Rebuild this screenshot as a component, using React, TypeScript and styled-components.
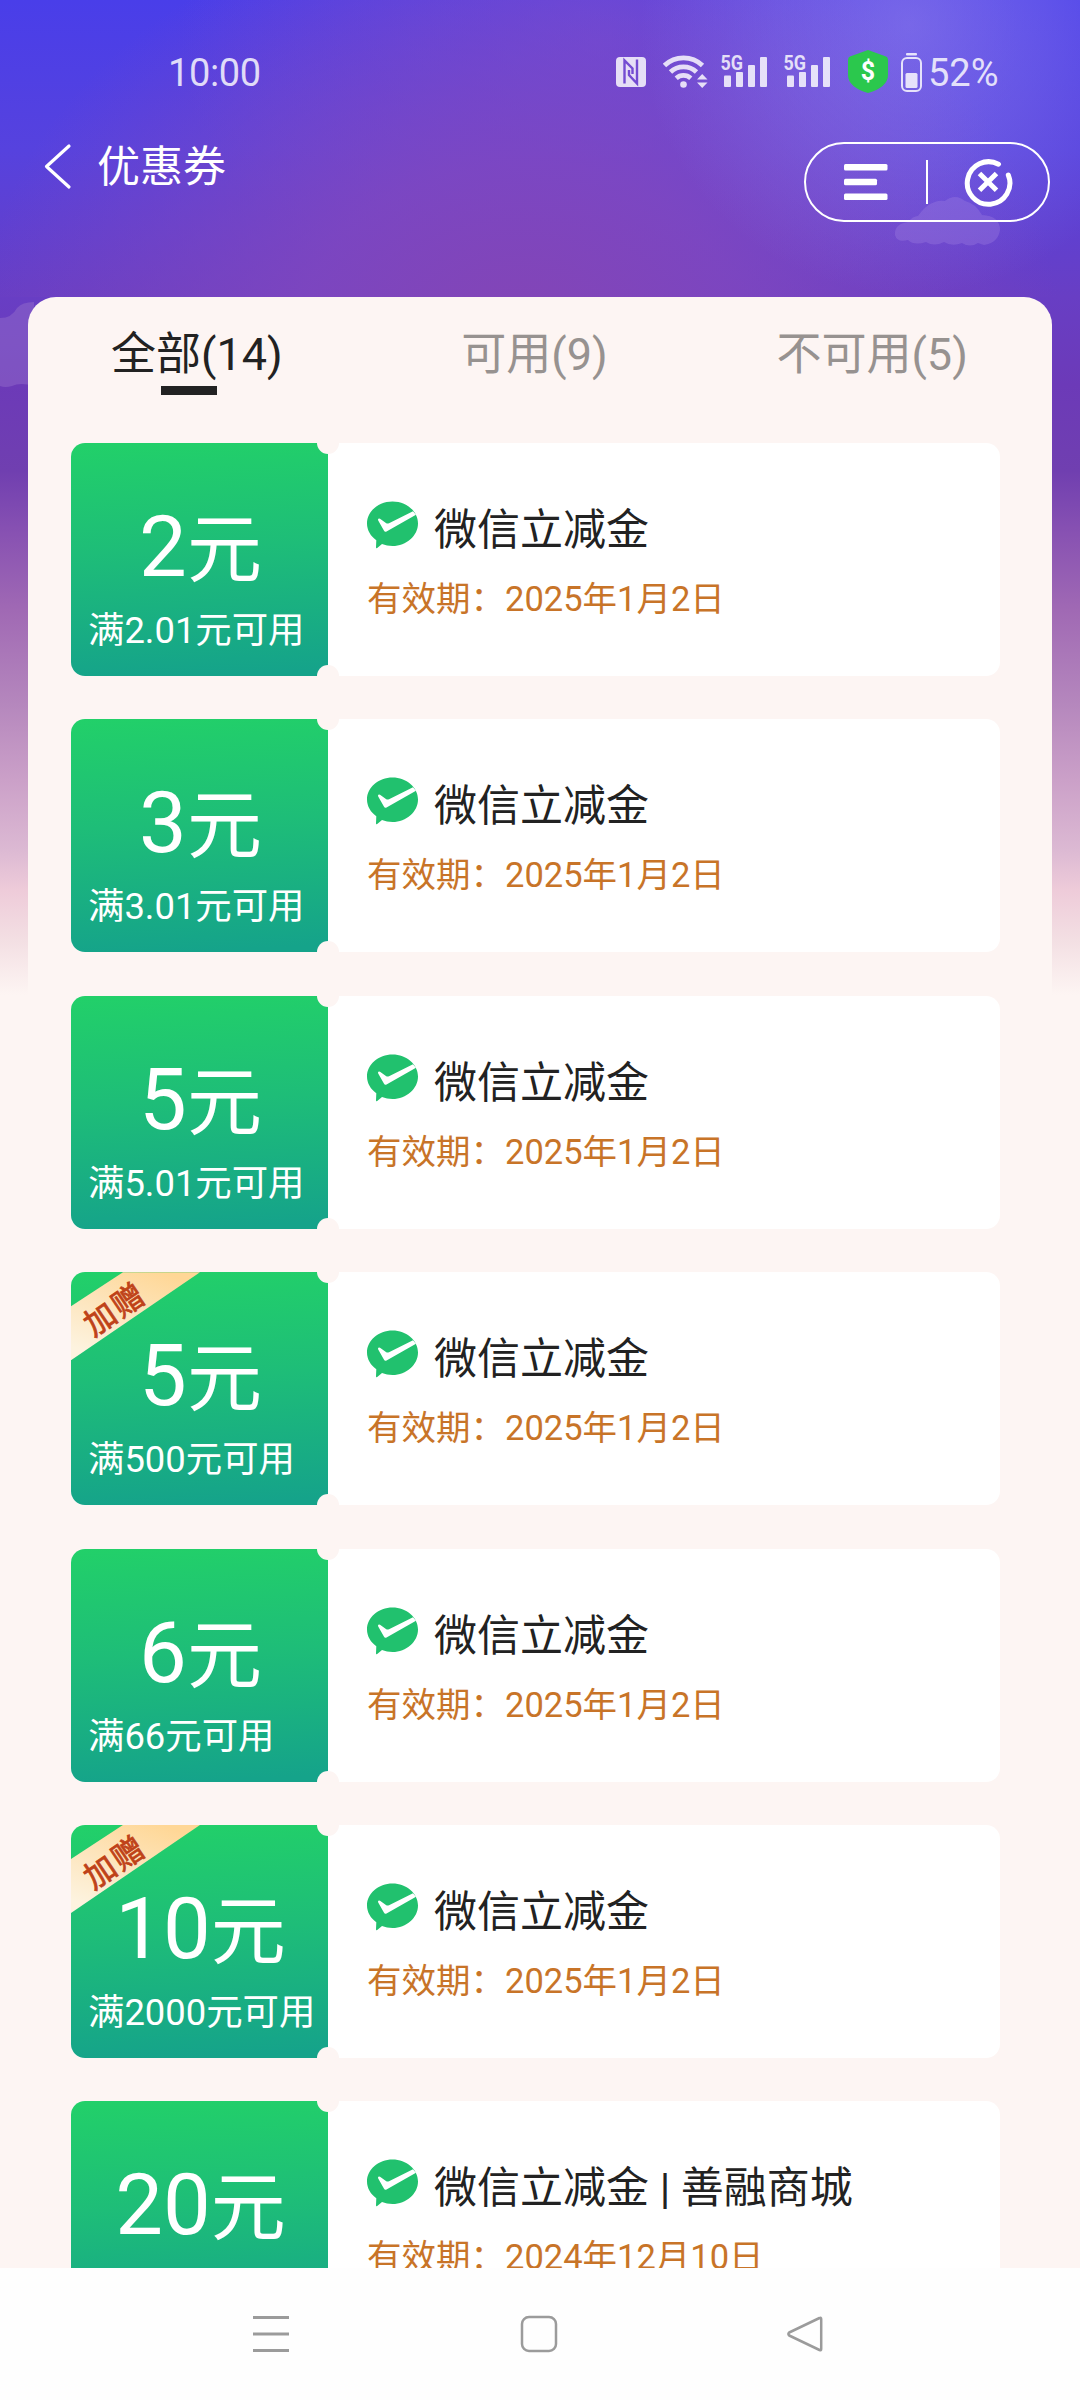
import React from "react";
import styled, { createGlobalStyle } from "styled-components";

const GlobalStyle = createGlobalStyle`
  * { box-sizing: border-box; }
  html, body { margin: 0; padding: 0; background: #fdf5f3; }
  body { font-family: Roboto, "Noto Sans CJK SC", sans-serif; }
`;

const Screen = styled.div`
  position: relative;
  width: 1080px;
  height: 2400px;
  overflow: hidden;
  display: flex;
  flex-direction: column;
  background:
    radial-gradient(ellipse 270px 270px at 910px 25px, rgba(150, 134, 236, 0.55), rgba(150, 134, 236, 0.3) 50%, rgba(150, 134, 236, 0) 100%) no-repeat 0 0 / 1080px 297px,
    radial-gradient(ellipse 540px 420px at 520px 330px, #8345b6 0%, rgba(129, 71, 190, 0.8) 40%, rgba(124, 73, 205, 0) 100%) no-repeat 0 0 / 1080px 297px,
    radial-gradient(ellipse 420px 300px at 600px 40px, rgba(124, 80, 210, 0.6), rgba(124, 80, 210, 0) 100%) no-repeat 0 0 / 1080px 297px,
    linear-gradient(180deg, #493ee9 0, #5642de 150px, #683ec4 297px, #6c3ab8 385px, #703fb0 471px, #8650b2 528px,
      #a069b4 610px, #b587bd 704px, #cba0c8 780px, #dcb9d3 850px, #eecbd9 890px, #f3dfe3 940px, #fdf5f3 995px);
`;

const Clouds = styled.svg`
  position: absolute;
  left: 0;
  top: 0;
`;

const StatusBar = styled.header`
  position: relative;
  height: 142px;
  padding: 50px 0 0 168px;
  display: flex;
  align-items: flex-start;
  color: rgba(255, 255, 255, 0.82);
  font-size: 38px;
  line-height: 46px;
`;

const Clock = styled.span`
  width: 448px;
  letter-spacing: -0.4px;
`;

const Battery = styled.span`
  display: flex;
  gap: 6px;
`;

const StatusIcons = styled.div`
  display: flex;
  align-items: flex-start;
  svg { display: block; flex: none; }
`;

const Gap = styled.i<{ $w: number }>`
  width: ${(p) => p.$w}px;
`;

const TitleBar = styled.div`
  position: relative;
  height: 155px;
  padding: 0 30px 0 43px;
  display: flex;
  align-items: flex-start;
  justify-content: space-between;
`;

const BackLink = styled.div`
  display: flex;
  align-items: center;
  gap: 25px;
  height: 50px;
  color: #fff;
`;

const PageTitle = styled.h1`
  margin: 0;
  font-size: 43px;
  line-height: 50px;
  font-weight: 400;
`;

const Capsule = styled.div`
  width: 246px;
  height: 80px;
  border: 2px solid #fff;
  border-radius: 40px;
  display: flex;
  align-items: center;
  padding-left: 38px;
`;

const Divider = styled.span`
  width: 2px;
  height: 44px;
  margin: 0 34px 0 38px;
  background: #fff;
`;

const Panel = styled.main`
  position: relative;
  width: 1024px;
  height: 1971px;
  margin: 0 28px;
  overflow: hidden;
  border-radius: 28px 28px 0 0;
  background: #fdf5f3;
`;

const Tabs = styled.nav`
  display: grid;
  grid-template-columns: repeat(3, 1fr);
  height: 146px;
  padding: 30px 11px 0 0;
`;

const Tab = styled.div<{ $active?: boolean }>`
  display: flex;
  flex-direction: column;
  align-items: center;
  font-size: 45px;
  line-height: 56px;
  color: ${(p) => (p.$active ? "#222222" : "#979290")};
`;

const Underline = styled.span`
  width: 56px;
  height: 9px;
  margin: 3px 16px 0 0;
  background: #222;
`;

const CouponList = styled.div`
  display: flex;
  flex-direction: column;
  gap: 43.4px;
  padding: 0 52px 0 43px;
`;

const Coupon = styled.article`
  position: relative;
  flex: none;
  display: flex;
  height: 233px;
  border-radius: 14px;
  background: #fff;
  overflow: hidden;

  &::before,
  &::after {
    content: "";
    position: absolute;
    z-index: 1;
    left: 246px;
    width: 22px;
    height: 22px;
    border-radius: 50%;
    background: #fdf5f3;
  }
  &::before { top: -11px; }
  &::after { bottom: -11px; }
`;

const Value = styled.div`
  position: relative;
  width: 257px;
  padding-top: 64px;
  color: #fff;
  background: linear-gradient(177deg, #22d069 0%, #1ebd78 45%, #15a38a 97%);
`;

const Amount = styled.div`
  height: 80px;
  line-height: 80px;
  font-size: 85px;
  text-align: center;
  white-space: nowrap;
  padding-left: 2px;
`;

const Unit = styled.span`
  font-size: 75px;
  line-height: 0;
`;

const Condition = styled.div`
  margin: 21px 0 0 17px;
  font-size: 36.4px;
  line-height: 45px;
  white-space: nowrap;
`;

const Ribbon = styled.div`
  position: absolute;
  left: 0;
  top: 0;
  width: 129px;
  height: 88px;
  display: flex;
  align-items: center;
  justify-content: center;
  padding: 0 44px 18px 0;

  &::before {
    content: "";
    position: absolute;
    inset: 0;
    clip-path: polygon(52px 0, 129px 0, 0 88px, 0 34px);
    background: linear-gradient(200deg, #ffd796 10%, #fde3b8 45%, #fdf3df 90%);
  }
`;

const RibbonText = styled.span`
  position: relative;
  font-family: "Noto Sans CJK SC", sans-serif;
  font-size: 31.5px;
  line-height: 34px;
  letter-spacing: 2px;
  white-space: nowrap;
  color: #bf4218;
  -webkit-text-stroke: 0.8px #bf4218;
  transform: rotate(-34deg);
`;

const Info = styled.div`
  padding: 58px 0 0 39px;
`;

const InfoTitle = styled.div`
  display: flex;
  align-items: flex-start;
  gap: 16px;
  height: 58px;
  font-size: 43px;
  line-height: 58px;
  color: #222;
  white-space: nowrap;
`;

const Validity = styled.div`
  margin-top: 18px;
  font-size: 34.5px;
  line-height: 44px;
  color: #c87428;
  white-space: nowrap;
`;

const SystemNav = styled.footer`
  position: relative;
  height: 132px;
  display: flex;
  align-items: center;
  padding-left: 252px;
  gap: 229.5px;
  background: #fefefe;
`;

const Nfc = () => (
  <svg width="30" height="44" viewBox="0 0 30 44">
    <rect x="0" y="7" width="30" height="30" rx="4" fill="currentColor" />
    <path d="M8.500 33.500V10.500L16.500 18.500V24M21 9.500V33.500L13 25V20" fill="none" stroke="#744cd2" strokeWidth="2.400" />
  </svg>
);

const Wifi = () => (
  <svg width="45" height="44" viewBox="0 0 45 44" fill="none">
    <g stroke="currentColor" strokeWidth="4.800">
      <path d="M1.500 15.500A27.500 27.500 0 0 1 39.500 15.500" />
      <path d="M7.500 22A19 19 0 0 1 33.500 22" />
      <path d="M13.200 28.200A11 11 0 0 1 27.800 28.200" />
    </g>
    <circle cx="20.500" cy="34.500" r="3.300" fill="currentColor" />
    <path d="M34 29.500L39.200 24L44.500 29.500ZM34 32.500L39.200 38L44.500 32.500Z" fill="currentColor" />
  </svg>
);

const Signal = () => (
  <svg width="46" height="44" viewBox="0 0 46 44" fill="currentColor">
    <text x="-0.500" y="20" fontFamily="Roboto, sans-serif" fontSize="20.500" fontWeight="700" textLength="22.500" lengthAdjust="spacingAndGlyphs">5G</text>
    <rect x="3" y="25.500" width="7" height="11.500" rx="1" />
    <rect x="15" y="22" width="7" height="15" rx="1" />
    <rect x="27" y="15" width="7" height="22" rx="1" />
    <rect x="39" y="7" width="7" height="30" rx="1" />
  </svg>
);

const Shield = () => (
  <svg width="40" height="44" viewBox="0 0 40 44">
    <path d="M20 0L38 6.500Q40 7.300 40 10V25Q40 37 20 43Q0 37 0 25V10Q0 7.300 2 6.500Z" fill="#2bc84d" />
    <text x="20" y="30" textAnchor="middle" fontFamily="Roboto, sans-serif" fontSize="25" fontWeight="700" fill="#fff">$</text>
  </svg>
);

const BatteryIcon = () => (
  <svg width="21" height="44" viewBox="0 0 21 44">
    <rect x="5" y="3" width="11" height="2.500" rx="1" fill="currentColor" />
    <rect x="1" y="8" width="19" height="33" rx="5" fill="none" stroke="currentColor" strokeWidth="2" />
    <rect x="4.500" y="23" width="12" height="15" rx="1.500" fill="currentColor" />
  </svg>
);

const PayIcon = () => (
  <svg width="51" height="48" viewBox="0 0 51 48">
    <path
      d="M25.500 0.500C39.500 0.500 51 10.300 51 22.500S39.500 45 25.500 45C21.800 45 18.200 44.300 15 43L10.200 47Q9 47.600 9 46.200L9.300 39.200C3.600 35.200 0 29.200 0 22.500C0 10.300 11.500 0.500 25.500 0.500Z"
      fill="#21c16e"
    />
    <path d="M11 18.300Q11.600 17 13 17.800L19.300 22.200Q20.500 22.800 22 22.200L46 10.200L49 13.700L19.500 30.500Q17.800 31.300 16.900 29.500L11.200 19.600Z" fill="#fff" />
  </svg>
);

const coupons = [
  { amount: "2", condition: "满2.01元可用", title: "微信立减金", date: "2025年1月2日" },
  { amount: "3", condition: "满3.01元可用", title: "微信立减金", date: "2025年1月2日" },
  { amount: "5", condition: "满5.01元可用", title: "微信立减金", date: "2025年1月2日" },
  { amount: "5", condition: "满500元可用", title: "微信立减金", date: "2025年1月2日", bonus: true },
  { amount: "6", condition: "满66元可用", title: "微信立减金", date: "2025年1月2日" },
  { amount: "10", condition: "满2000元可用", title: "微信立减金", date: "2025年1月2日", bonus: true },
  { amount: "20", condition: "", title: "微信立减金 | 善融商城", date: "2024年12月10日" },
];

export default function App() {
  return (
    <>
      <GlobalStyle />
      <Screen>
        <Clouds width="1080" height="420" viewBox="0 0 1080 420">
          <path
            d="M895 235Q894 224 908 222Q913 216 918 216Q930 199 945 201Q955 193 965 201Q975 203 982 215Q1000 216 1000 230Q998 243 984 245L978 243Q970 248 962 243Q952 247 944 242Q934 247 926 242Q914 246 908 240Q897 243 895 235Z"
            fill="rgba(160,130,225,0.34)"
          />
          <path d="M0 318Q12 318 17 308Q22 302 34 302V386Q20 382 12 386Q5 388 0 386Z" fill="rgba(150,112,204,0.45)" />
        </Clouds>
        <StatusBar>
          <Clock>10:00</Clock>
          <StatusIcons>
            <Nfc />
            <Gap $w={17} />
            <Wifi />
            <Gap $w={13} />
            <Signal />
            <Gap $w={17} />
            <Signal />
            <Gap $w={18} />
            <Shield />
            <Gap $w={13} />
            <Battery>
              <BatteryIcon />
              <span>52%</span>
            </Battery>
          </StatusIcons>
        </StatusBar>
        <TitleBar>
          <BackLink>
            <svg width="29" height="50" viewBox="0 0 29 50">
              <path d="M26 4L3.500 24.500L26 45" fill="none" stroke="#fff" strokeWidth="3.200" strokeLinecap="round" strokeLinejoin="round" />
            </svg>
            <PageTitle>优惠券</PageTitle>
          </BackLink>
          <Capsule>
            <svg width="44" height="38" viewBox="0 0 44 38" fill="#fff">
              <rect x="0" y="1" width="43.500" height="6.500" rx="1.500" />
              <rect x="0" y="15.800" width="33" height="6.500" rx="1.500" />
              <rect x="0" y="30.500" width="43.500" height="6.500" rx="1.500" />
            </svg>
            <Divider />
            <svg width="52" height="52" viewBox="0 0 52 52" fill="none" stroke="#fff" strokeLinecap="round">
              <path d="M36.500 8.200A21.300 21.300 0 1 0 46.300 19" strokeWidth="5" />
              <path d="M17.500 17.500L34.500 34.200M34.500 17.500L17.500 34.200" strokeWidth="5" strokeLinecap="butt" />
            </svg>
          </Capsule>
        </TitleBar>
        <Panel>
          <Tabs>
            <Tab $active>
              全部(14)
              <Underline />
            </Tab>
            <Tab>可用(9)</Tab>
            <Tab>不可用(5)</Tab>
          </Tabs>
          <CouponList>
            {coupons.map((c, i) => (
              <Coupon key={i}>
                <Value>
                  {c.bonus && (
                    <Ribbon>
                      <RibbonText>加赠</RibbonText>
                    </Ribbon>
                  )}
                  <Amount>
                    {c.amount}
                    <Unit>元</Unit>
                  </Amount>
                  {c.condition && <Condition>{c.condition}</Condition>}
                </Value>
                <Info>
                  <InfoTitle>
                    <PayIcon />
                    {c.title}
                  </InfoTitle>
                  <Validity>有效期：{c.date}</Validity>
                </Info>
              </Coupon>
            ))}
          </CouponList>
        </Panel>
        <SystemNav>
          <svg width="38" height="38" viewBox="0 0 38 38" stroke="#9b9b9b" strokeWidth="2.800">
            <path d="M1 2.500H37M1 19H37M1 35.500H37" />
          </svg>
          <svg width="38" height="38" viewBox="0 0 38 38" fill="none" stroke="#9b9b9b" strokeWidth="2.500">
            <rect x="2" y="2" width="34" height="34" rx="7" />
          </svg>
          <svg width="38" height="38" viewBox="0 0 38 38" fill="none" stroke="#9b9b9b" strokeWidth="2.500" strokeLinejoin="round">
            <path d="M32.500 3Q34.200 2 34.200 4V34Q34.200 36 32.500 35L2.200 20.500Q0.500 19 2.200 17.500Z" />
          </svg>
        </SystemNav>
      </Screen>
    </>
  );
}
